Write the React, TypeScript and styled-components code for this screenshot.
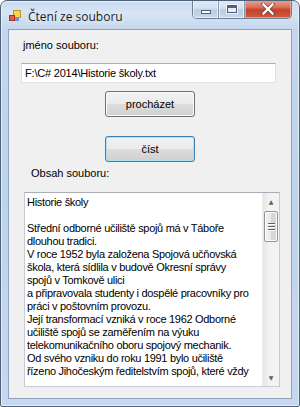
import React from "react";
import styled, { createGlobalStyle } from "styled-components";

const GlobalStyle = createGlobalStyle`
  html, body { margin: 0; padding: 0; background: #ffffff; }
  * { box-sizing: border-box; }
`;

const lines = [
  "Historie školy",
  "",
  "Střední odborné učiliště spojů má v Táboře",
  "dlouhou tradici.",
  "V roce 1952 byla založena Spojová učňovská",
  "škola, která sídlila v budově Okresní správy",
  "spojů v Tomkově ulici",
  "a připravovala studenty i dospělé pracovníky pro",
  "práci v poštovním provozu.",
  "Její transformací vzniká v roce 1962 Odborné",
  "učiliště spojů se zaměřením na výuku",
  "telekomunikačního oboru spojový mechanik.",
  "Od svého vzniku do roku 1991 bylo učiliště",
  "řízeno Jihočeským ředitelstvím spojů, které vždy",
];

const App = () => {
  return (
    <>
      <GlobalStyle />
      <Swindow>
        <StitleBar>
          <AppIcon />
          <Stitle>Čtení ze souboru</Stitle>
          <Scaption>
            <ScapBtn>
              <SminGlyph />
            </ScapBtn>
            <ScapBtn>
              <SmaxGlyph />
            </ScapBtn>
            <ScloseBtn>
              <CloseGlyph />
            </ScloseBtn>
          </Scaption>
        </StitleBar>
        <Sclient>
          <Slabel>jméno souboru:</Slabel>
          <StextBox>F:\C# 2014\Historie školy.txt</StextBox>
          <Sbutton $top={8}>procházet</Sbutton>
          <Sbutton $top={19} $focused>
            číst
          </Sbutton>
          <Slabel $left={22} $top={5}>
            Obsah souboru:
          </Slabel>
          <Smemo>
            <SmemoText>
              {lines.map((line, i) => (
                <SmemoLine key={i}>{line || "\u00a0"}</SmemoLine>
              ))}
            </SmemoText>
            <Sscroll>
              <Sarrow>▲</Sarrow>
              <Sthumb>
                <Sgrip />
                <Sgrip />
                <Sgrip />
              </Sthumb>
              <Strack />
              <Sarrow>▼</Sarrow>
            </Sscroll>
          </Smemo>
        </Sclient>
      </Swindow>
    </>
  );
};

const AppIcon = () => (
  <svg width="12" height="12" viewBox="0 0 12 12" style={{ flex: "none" }}>
    <rect x="4.5" y="0.5" width="7" height="7" fill="#f7d44a" stroke="#c9941a" />
    <rect x="0.5" y="5.5" width="5" height="5" fill="#e25b45" stroke="#a8321f" />
    <rect x="6" y="8" width="4" height="3" fill="#6d8fcf" />
  </svg>
);

const CloseGlyph = () => (
  <svg width="14" height="12" viewBox="0 0 14 12">
    <path
      d="M2 1 L12 11 M12 1 L2 11"
      stroke="#3c2020"
      strokeWidth="4"
      strokeLinecap="square"
      opacity="0.5"
    />
    <path
      d="M2.5 1.5 L11.5 10.5 M11.5 1.5 L2.5 10.5"
      stroke="#ffffff"
      strokeWidth="2.4"
      strokeLinecap="square"
    />
  </svg>
);

const Swindow = styled.div`
  width: 300px;
  height: 407px;
  display: flex;
  flex-direction: column;
  border: 1px solid #4e6178;
  border-radius: 7px 7px 2px 2px;
  background: linear-gradient(
    180deg,
    #c9dbf1 0px,
    #d7e4f4 12px,
    #c3d6ee 30px,
    #bed3ec 200px,
    #c6d8ef 407px
  );
  padding: 0 7px 7px 7px;
  overflow: hidden;
  box-shadow: inset 0 0 0 1px rgba(255, 255, 255, 0.55);
`;

const StitleBar = styled.div`
  height: 28px;
  display: flex;
  align-items: flex-start;
  padding-top: 9px;
  padding-left: 1px;
  position: relative;
`;

const Stitle = styled.span`
  margin-left: 7px;
  margin-top: -2px;
  font-family: "Open Sans", "Noto Sans", sans-serif;
  font-size: 12px;
  color: #1e1e1e;
  text-shadow: 0 0 6px rgba(255, 255, 255, 0.9);
`;

const Scaption = styled.div`
  position: absolute;
  top: -1px;
  right: 0px;
  display: flex;
  height: 19px;
  border: 1px solid #6f7f93;
  border-top: none;
  border-radius: 0 0 5px 5px;
  overflow: hidden;
`;

const ScapBtn = styled.div`
  width: 26px;
  height: 100%;
  display: flex;
  align-items: center;
  justify-content: center;
  background: linear-gradient(180deg, #e2ebf6 0%, #d4e1f1 45%, #bccde3 55%, #c8d8ec 100%);
  border-right: 1px solid #8797ab;
  box-shadow: inset 0 0 0 1px rgba(255, 255, 255, 0.6);
`;

const SminGlyph = styled.div`
  width: 10px;
  height: 4px;
  margin-top: 5px;
  background: #ffffff;
  border: 1px solid #50607a;
`;

const SmaxGlyph = styled.div`
  width: 10px;
  height: 8px;
  border: 1px solid #50607a;
  border-top-width: 3px;
  background: #e8eef6;
  box-shadow: 0 0 0 1px rgba(255, 255, 255, 0.7);
`;

const ScloseBtn = styled.div`
  width: 46px;
  height: 100%;
  display: flex;
  align-items: center;
  justify-content: center;
  background: linear-gradient(180deg, #e8a493 0%, #d9715b 40%, #c4402a 55%, #d25c3f 100%);
  box-shadow: inset 0 0 0 1px rgba(255, 210, 200, 0.55);
`;

const Sclient = styled.div`
  flex: 1;
  background: #f0f0f0;
  border: 1px solid #8da2bd;
  display: flex;
  flex-direction: column;
  align-items: flex-start;
  padding-top: 9px;
`;

const Slabel = styled.div<{ $left?: number; $top?: number }>`
  margin-left: ${(p) => p.$left ?? 14}px;
  margin-top: ${(p) => p.$top ?? 0}px;
  font-family: "Liberation Sans", Arial, sans-serif;
  font-size: 11px;
  line-height: 13px;
  color: #000000;
`;

const StextBox = styled.div`
  margin: 11px 0 0 12px;
  width: 255px;
  height: 20px;
  background: #ffffff;
  border: 1px solid #dbdfe6;
  border-top-color: #abadb3;
  padding: 2px 0 0 3px;
  font-family: "Liberation Sans", Arial, sans-serif;
  font-size: 11px;
  line-height: 14px;
  letter-spacing: -0.2px;
  color: #000000;
  white-space: nowrap;
`;

const Sbutton = styled.div<{ $top: number; $focused?: boolean }>`
  margin: ${(p) => p.$top}px 0 0 96px;
  width: 90px;
  height: 26px;
  display: flex;
  align-items: center;
  justify-content: center;
  border: 1px solid ${(p) => (p.$focused ? "#3c7fb1" : "#707070")};
  border-radius: 3px;
  background: linear-gradient(180deg, #f2f2f2 0%, #ebebeb 48%, #dddddd 52%, #cfcfcf 100%);
  box-shadow: inset 0 0 0 1px ${(p) => (p.$focused ? "#aee0f6" : "#fbfbfb")};
  font-family: "Liberation Sans", Arial, sans-serif;
  font-size: 11px;
  color: #000000;
`;

const Smemo = styled.div`
  margin: 12px 0 0 15px;
  width: 256px;
  height: 195px;
  background: #ffffff;
  border: 1px solid #c8cbd1;
  border-top-color: #abadb3;
  display: flex;
`;

const SmemoText = styled.div`
  flex: 1;
  padding: 3px 0 0 2px;
  font-family: "Liberation Sans", Arial, sans-serif;
  font-size: 11px;
  line-height: 13px;
  letter-spacing: -0.3px;
  color: #000000;
  overflow: hidden;
`;

const SmemoLine = styled.div`
  white-space: nowrap;
`;

const Sscroll = styled.div`
  width: 17px;
  display: flex;
  flex-direction: column;
  background: linear-gradient(90deg, #e6e6e6, #f3f3f3 40%, #f3f3f3);
  border-left: 1px solid #ececec;
`;

const Sarrow = styled.div`
  height: 17px;
  display: flex;
  align-items: center;
  justify-content: center;
  font-size: 6px;
  color: #606060;
  font-family: "DejaVu Sans", sans-serif;
`;

const Sthumb = styled.div`
  height: 31px;
  margin: 1px 1px 0 1px;
  border: 1px solid #959595;
  border-radius: 2px;
  background: linear-gradient(90deg, #f3f3f3 0%, #e9e9e9 50%, #d6d6d6 51%, #d9d9d9 100%);
  box-shadow: inset 0 0 0 1px #fafafa;
  display: flex;
  flex-direction: column;
  align-items: center;
  justify-content: center;
  gap: 2px;
`;

const Sgrip = styled.div`
  width: 7px;
  height: 1px;
  background: #5f5f5f;
  box-shadow: 0 1px 0 #ffffff;
`;

const Strack = styled.div`
  flex: 1;
`;

export default App;
